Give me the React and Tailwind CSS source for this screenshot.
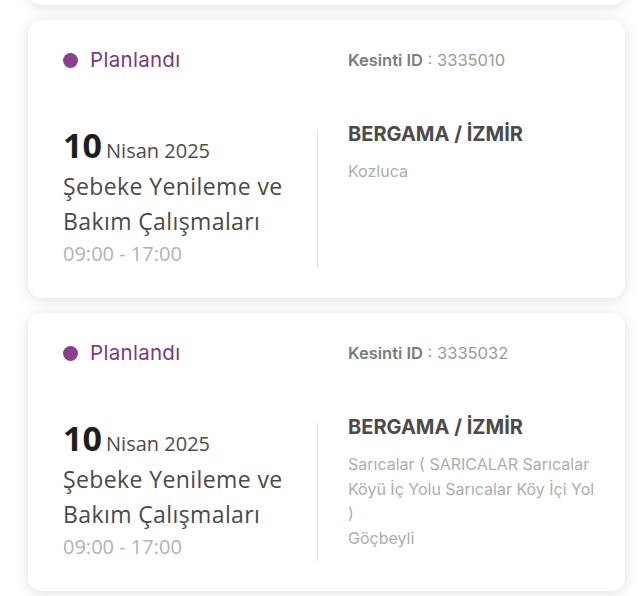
const outages = [
  {
    id: "3335010",
    day: "10",
    month: "Nisan 2025",
    title: "Şebeke Yenileme ve Bakım Çalışmaları",
    time: "09:00 - 17:00",
    place: "BERGAMA / İZMİR",
    areas: ["Kozluca"],
  },
  {
    id: "3335032",
    day: "10",
    month: "Nisan 2025",
    title: "Şebeke Yenileme ve Bakım Çalışmaları",
    time: "09:00 - 17:00",
    place: "BERGAMA / İZMİR",
    areas: ["Sarıcalar ( SARICALAR Sarıcalar Köyü İç Yolu Sarıcalar Köy İçi Yol )", "Göçbeyli"],
  },
];

function OutageCard({ item }) {
  return (
    <div className="rounded-[14px] bg-white pl-[35px] pr-[16px] pt-[28px] pb-[30px] shadow-[0_2px_14px_rgba(0,0,0,0.13)]">
      <div className="grid grid-cols-[254px_1fr]">
        <div className="flex items-center gap-[12px] font-['Inter',sans-serif] text-[20.5px] leading-[24px] tracking-[0.3px] text-[#7b3a80]">
          <span className="h-[15px] w-[15px] rounded-full bg-[#8a3f8f]" />
          Planlandı
        </div>
        <div className="pl-[31px] font-['Inter',sans-serif] text-[16.5px] leading-[24px] text-[#9a9a9a]">
          <span className="font-semibold text-[#7c7c7c]">Kesinti ID</span> : {item.id}
        </div>
      </div>

      <div className="mt-[58px] grid grid-cols-[254px_1fr]">
        <div className="font-['Open_Sans',sans-serif] text-[#4a4a4a]">
          <div className="leading-[30px]">
            <span className="text-[34px] font-bold text-[#1e1e1e]">{item.day}</span>{" "}
            <span className="text-[20px] text-[#4d4d4d]">{item.month}</span>
          </div>
          <div className="mt-[2px] pr-[6px] text-[23px] leading-[35px] tracking-[0.4px]">{item.title}</div>
          <div className="text-[20px] leading-[29px] text-[#b3b3b3]">{item.time}</div>
        </div>
        <div className="border-l border-[#e2e2e2] pl-[30px] pr-[9px] font-['Inter',sans-serif]">
          <div className="-mt-[6px] text-[20px] font-bold leading-[20px] text-[#4b4b4b]">{item.place}</div>
          <div className="mt-[15px] text-[16px] leading-[24.5px] text-[#adadad]">
            {item.areas.map((a) => (
              <div key={a}>{a}</div>
            ))}
          </div>
        </div>
      </div>
    </div>
  );
}

export default function App() {
  return (
    <div className="min-h-[596px] overflow-hidden bg-white pl-[28px] pr-[15px]">
      <div className="-mt-[273px] flex flex-col gap-[15px]">
        <div className="h-[278px] rounded-[14px] bg-white shadow-[0_2px_14px_rgba(0,0,0,0.13)]" />
        {outages.map((item) => (
          <OutageCard key={item.id} item={item} />
        ))}
      </div>
    </div>
  );
}
